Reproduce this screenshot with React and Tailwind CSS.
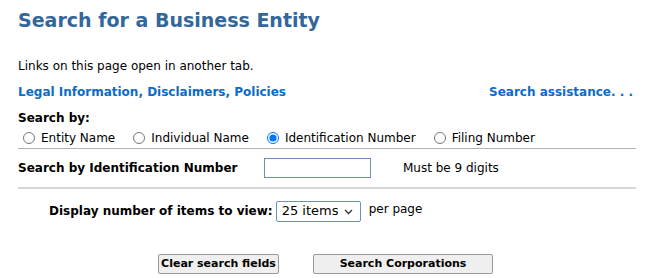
import React from "react";

function Radio({ label, checked }) {
  return (
    <label className="flex items-center whitespace-nowrap">
      <input
        type="radio"
        name="searchby"
        defaultChecked={checked}
        className="w-[12px] h-[12px] ml-[5px] mr-[6px] accent-[#0075ff]"
      />
      <span>{label}</span>
    </label>
  );
}

export default function App() {
  return (
    <div className="w-[650px] h-[278px] bg-white text-black text-[12px] overflow-hidden font-['Verdana','DejaVu_Sans',sans-serif]">
      <div className="pl-[18px] w-[636px] flex flex-col">
        <div className="h-[40px] flex items-center">
          <h1 className="text-[19px] font-bold text-[#336699] leading-none whitespace-nowrap">Search for a Business Entity</h1>
        </div>
        <div className="h-[16px]" />
        <div className="h-[20px] flex items-center">Links on this page open in another tab.</div>
        <div className="h-[6px]" />
        <div className="h-[20px] flex items-center justify-between font-bold text-[#0b6cc7]">
          <a href="#">Legal Information, Disclaimers, Policies</a>
          <a href="#" className="mr-[3px]">Search assistance. . .</a>
        </div>
        <div className="h-[6px]" />
        <div className="h-[20px] flex items-center font-bold">Search by:</div>
        <div className="h-[20px] flex items-center gap-[13px]">
          <Radio label="Entity Name" />
          <Radio label="Individual Name" />
          <Radio label="Identification Number" checked />
          <Radio label="Filing Number" />
        </div>
        <div className="h-[1px] bg-[#b3b3b3]" />
        <div className="h-[38px] flex items-center">
          <span className="font-bold w-[246px] whitespace-nowrap">Search by Identification Number</span>
          <input
            type="text"
            className="w-[107px] h-[20px] border border-[#6f8fb8] bg-white outline-none"
          />
          <span className="ml-[32px]">Must be 9 digits</span>
        </div>
        <div className="h-[2px] bg-[#d6d6d6]" />
        <div className="h-[44px] flex items-center pl-[31px]">
          <span className="font-bold mr-[3px] whitespace-nowrap">Display number of items to view:</span>
          <div className="relative w-[85px] h-[21px] border border-[#6f8fb8] rounded-[2px] flex items-center pl-[5px] text-[13px]">
            <span>25 items</span>
            <svg className="absolute right-[7px] top-[7px]" width="9" height="6" viewBox="0 0 9 6">
              <path d="M1 1 L4.5 4.5 L8 1" fill="none" stroke="#333" strokeWidth="1.3" />
            </svg>
          </div>
          <span className="ml-[8px] -mt-[4px]">per page</span>
        </div>
        <div className="h-[21px]" />
        <div className="flex items-center">
          <button className="ml-[140px] w-[121px] h-[20px] border border-[#999] rounded-[2px] bg-[#efefef] font-bold text-[11px] whitespace-nowrap flex items-center justify-center">
            Clear search fields
          </button>
          <button className="ml-[34px] w-[180px] h-[20px] border border-[#999] rounded-[2px] bg-[#efefef] font-bold text-[11px] whitespace-nowrap flex items-center justify-center">
            Search Corporations
          </button>
        </div>
      </div>
    </div>
  );
}
